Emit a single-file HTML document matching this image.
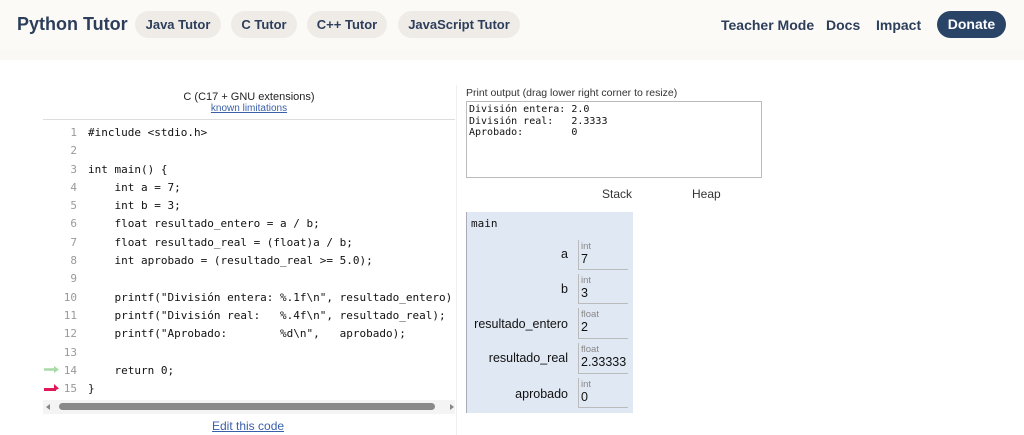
<!DOCTYPE html>
<html><head><meta charset="utf-8"><style>
*{box-sizing:border-box;margin:0;padding:0}
body{width:1024px;height:435px;overflow:hidden;background:#fff;font-family:"Liberation Sans",sans-serif;position:relative}
.hdr{position:absolute;left:0;top:0;width:1024px;height:50px;background:#fcfaf7;}
.band{position:absolute;left:0;top:50px;width:1024px;height:10px;background:#faf8f5}
.logo{position:absolute;left:17px;top:14px;font-size:18px;font-weight:bold;color:#2d3e5a}
.pill{position:absolute;top:11px;height:27px;border-radius:14px;background:#efece8;color:#2d3e5a;font-weight:bold;font-size:13px;line-height:27px;text-align:center}
.nav{position:absolute;top:17px;font-size:14px;font-weight:bold;color:#2d3e5a}
.don{position:absolute;left:937px;top:11px;width:69px;height:27px;border-radius:14px;background:#2a4468;color:#fff;font-weight:bold;font-size:14px;line-height:27px;text-align:center}
.t{position:absolute;white-space:pre}
.code{font-family:"DejaVu Sans Mono",monospace;font-size:11px;color:#111}
.ln{font-family:"DejaVu Sans Mono",monospace;font-size:11px;color:#999;text-align:right;width:40px}
.cell{position:absolute;left:578px;width:50px;border-left:1px solid #bbb;border-bottom:1px solid #bbb;padding-left:2px;font-family:"Liberation Sans",sans-serif}
.cell .ty{font-size:9.5px;color:#888;line-height:11px;margin-top:1px}
.cell .v{font-size:12.5px;color:#111;line-height:15px}
.lab{position:absolute;left:470px;width:98px;text-align:right;font-size:12.5px;color:#111;font-family:"Liberation Sans",sans-serif;white-space:pre}
</style></head><body>
<div class="hdr"></div><div class="band"></div>
<div class="logo">Python Tutor</div>
<div class="pill" style="left:135px;width:86px">Java Tutor</div>
<div class="pill" style="left:231px;width:66px">C Tutor</div>
<div class="pill" style="left:307px;width:80px">C++ Tutor</div>
<div class="pill" style="left:398px;width:122px">JavaScript Tutor</div>
<div class="nav" style="left:721px">Teacher Mode</div>
<div class="nav" style="left:826px">Docs</div>
<div class="nav" style="left:876px">Impact</div>
<div class="don">Donate</div>

<div class="t" style="left:43px;top:91px;width:412px;text-align:center;font-size:11px;color:#222">C (C17 + GNU extensions)</div>
<div class="t" style="left:43px;top:103px;width:412px;text-align:center;font-size:10px;color:#3a5fa8;text-decoration:underline">known limitations</div>
<div style="position:absolute;left:43px;top:119px;width:412px;height:1px;background:#ddd"></div>
<div style="position:absolute;left:456px;top:85px;width:1px;height:350px;background:#eee"></div>

<div class="ln t" style="left:37px;top:124px;line-height:18.3px">1
2
3
4
5
6
7
8
9
10
11
12
13
14
15</div>
<div class="code t" style="left:88px;top:124px;line-height:18.3px">#include &lt;stdio.h&gt;

int main() {
    int a = 7;
    int b = 3;
    float resultado_entero = a / b;
    float resultado_real = (float)a / b;
    int aprobado = (resultado_real &gt;= 5.0);

    printf("División entera: %.1f\n", resultado_entero)
    printf("División real:   %.4f\n", resultado_real);
    printf("Aprobado:        %d\n",   aprobado);

    return 0;
}</div>
<svg style="position:absolute;left:43px;top:364px" width="20" height="30">
<path d="M1 5.5H14" stroke="#a8dba8" stroke-width="2.5"/><path d="M11 2L16 5.5L11 9" fill="#a8dba8"/>
<path d="M1 24H13V27H1Z" fill="#e0185a"/><path d="M11 20L16 24.5L11 27Z" fill="#e0185a"/>
</svg>
<div style="position:absolute;left:43px;top:400px;width:412px;height:14px;background:#f4f4f4"></div>
<svg style="position:absolute;left:46px;top:402px" width="410" height="10"><path d="M0 5L4 2V8Z" fill="#888"/><path d="M404 2L408 5L404 8Z" fill="#888"/></svg>
<div style="position:absolute;left:59px;top:403px;width:376px;height:7px;border-radius:4px;background:#8a8a8a"></div>
<div class="t" style="left:212px;top:419px;font-size:12px;color:#3a5fa8;text-decoration:underline">Edit this code</div>

<div class="t" style="left:466px;top:87px;font-size:10.5px;color:#333">Print output (drag lower right corner to resize)</div>
<div style="position:absolute;left:466px;top:101px;width:296px;height:77px;border:1px solid #bbb"></div>
<div class="code t" style="left:469px;top:104px;line-height:11.7px;font-size:10px">División entera: 2.0
División real:   2.3333
Aprobado:        0</div>
<div class="t" style="left:602px;top:187px;font-size:12px;color:#333">Stack</div>
<div class="t" style="left:692px;top:187px;font-size:12px;color:#333">Heap</div>

<div style="position:absolute;left:466px;top:212px;width:167px;height:201px;background:#e0e8f4;border-left:1px solid #aab"></div>
<div class="code t" style="left:471px;top:217px;font-size:11px">main</div>
<div class="cell" style="top:240px;height:30px"><div class="ty">int</div><div class="v">7</div></div>
<div class="cell" style="top:274px;height:30px"><div class="ty">int</div><div class="v">3</div></div>
<div class="cell" style="top:308px;height:31px"><div class="ty">float</div><div class="v">2</div></div>
<div class="cell" style="top:343px;height:31px"><div class="ty">float</div><div class="v">2.33333</div></div>
<div class="cell" style="top:378px;height:30px"><div class="ty">int</div><div class="v">0</div></div>
<div class="lab" style="top:247px">a</div>
<div class="lab" style="top:282px">b</div>
<div class="lab" style="top:317px">resultado_entero</div>
<div class="lab" style="top:351px">resultado_real</div>
<div class="lab" style="top:387px">aprobado</div>
</body></html>
